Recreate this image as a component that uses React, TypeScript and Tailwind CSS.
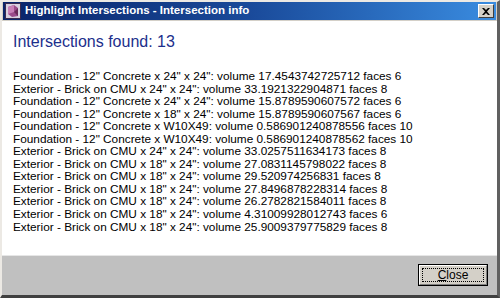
import React from 'react';

const rows: string[] = [
    'Foundation - 12" Concrete x 24" x 24": volume 17.4543742725712 faces 6',
    'Exterior - Brick on CMU x 24" x 24": volume 33.1921322904871 faces 8',
    'Foundation - 12" Concrete x 24" x 24": volume 15.8789590607572 faces 6',
    'Foundation - 12" Concrete x 18" x 24": volume 15.8789590607567 faces 6',
    'Foundation - 12" Concrete x W10X49: volume 0.586901240878556 faces 10',
    'Foundation - 12" Concrete x W10X49: volume 0.586901240878562 faces 10',
    'Exterior - Brick on CMU x 24" x 24": volume 33.0257511634173 faces 8',
    'Exterior - Brick on CMU x 18" x 24": volume 27.0831145798022 faces 8',
    'Exterior - Brick on CMU x 18" x 24": volume 29.520974256831 faces 8',
    'Exterior - Brick on CMU x 18" x 24": volume 27.8496878228314 faces 8',
    'Exterior - Brick on CMU x 18" x 24": volume 26.2782821584011 faces 8',
    'Exterior - Brick on CMU x 18" x 24": volume 4.31009928012743 faces 6',
    'Exterior - Brick on CMU x 18" x 24": volume 25.9009379775829 faces 8',
];

function AppIcon() {
    return (
        <svg width="16" height="16" viewBox="0 0 16 16">
            <rect x="0.5" y="0.5" width="15" height="15" fill="#d8d0e0" stroke="#3a2a50" />
            <path d="M3 4 L9 2 L13 5 L13 13 L7 14 L3 11 Z" fill="#9a4a8a" />
            <path d="M3 4 L9 2 L9 9 L3 11 Z" fill="#c880b8" />
            <path d="M9 9 L13 5 L13 13 Z" fill="#6a2a5a" />
        </svg>
    );
}

export default function App() {
    return (
        <div
            className="w-[500px] h-[298px] flex flex-col bg-[#d4d0c8] border-t-2 border-l-2 border-t-[#ece9e4] border-l-[#ece9e4] border-b-[3px] border-r-[3px] border-b-[#404040] border-r-[#606060]"
            style={{ fontFamily: '"Liberation Sans", Arial, sans-serif' }}
        >
            {/* Title bar */}
            <div className="h-[18px] mx-[1px] flex items-center bg-gradient-to-r from-[#0a246a] via-[#1a4a9a] to-[#3a8ce0] pl-[2px] pr-[2px]">
                <AppIcon />
                <span className="ml-[4px] text-white text-[11.5px] font-bold leading-none">
                    Highlight Intersections - Intersection info
                </span>
                <div className="ml-auto w-[16px] h-[14px] bg-[#d4d0c8] border border-t-white border-l-white border-b-[#404040] border-r-[#404040] flex items-center justify-center">
                    <svg width="8" height="7" viewBox="0 0 8 7">
                        <path d="M0 0 L2 0 L4 2 L6 0 L8 0 L5 3.5 L8 7 L6 7 L4 5 L2 7 L0 7 L3 3.5 Z" fill="#000" />
                    </svg>
                </div>
            </div>

            {/* Content */}
            <div className="flex-1 bg-white border-b border-b-[#e6e6e6] mt-[1px] pl-[11px] pt-[11px]">
                <div className="text-[16px] text-[#1c2f8c] leading-[19px]">Intersections found: 13</div>
                <div className="mt-[19px] text-[11.8px] text-black leading-[12.55px]">
                    {rows.map((row, i) => (
                        <div key={i} className="whitespace-nowrap">{row}</div>
                    ))}
                </div>
            </div>

            {/* Footer */}
            <div className="h-[39px] flex items-start justify-end pt-[8px] pr-[9px] bg-[#c0c0c0]">
                <button className="w-[70px] h-[22px] border border-black bg-[#d4d0c8] p-0">
                    <div className="w-full h-full border border-t-white border-l-white border-b-[#808080] border-r-[#808080] p-[2px]">
                        <div className="w-full h-full border border-dotted border-black flex items-center justify-center text-[12px] leading-none text-black">
                            <span><span className="underline">C</span>lose</span>
                        </div>
                    </div>
                </button>
            </div>
        </div>
    );
}
